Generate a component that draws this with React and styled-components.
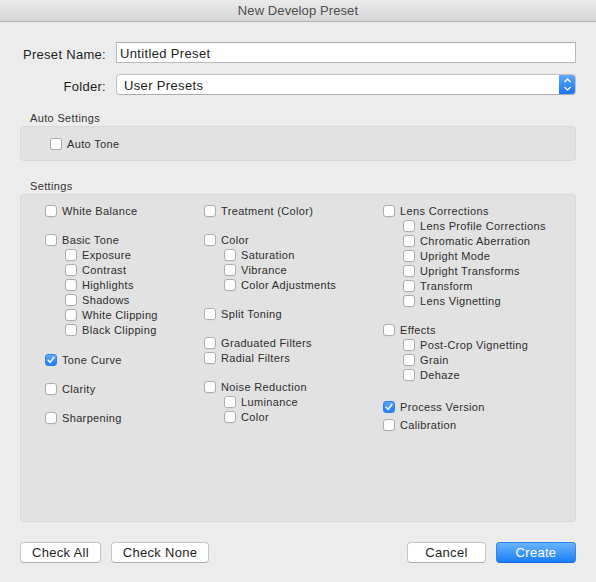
import React from 'react';
import styled, { createGlobalStyle } from 'styled-components';

const GlobalStyle = createGlobalStyle`
  html, body {
    margin: 0;
    padding: 0;
    background: #ececec;
  }
  body {
    font-family: "Liberation Sans", Arial, sans-serif;
    -webkit-font-smoothing: antialiased;
  }
`;

const columns = [
  [
    { label: 'White Balance' },
    { label: 'Basic Tone', top: 14 },
    { label: 'Exposure', sub: true },
    { label: 'Contrast', sub: true },
    { label: 'Highlights', sub: true },
    { label: 'Shadows', sub: true },
    { label: 'White Clipping', sub: true },
    { label: 'Black Clipping', sub: true },
    { label: 'Tone Curve', top: 15, checked: true },
    { label: 'Clarity', top: 14 },
    { label: 'Sharpening', top: 14 },
  ],
  [
    { label: 'Treatment (Color)' },
    { label: 'Color', top: 14 },
    { label: 'Saturation', sub: true },
    { label: 'Vibrance', sub: true },
    { label: 'Color Adjustments', sub: true },
    { label: 'Split Toning', top: 14 },
    { label: 'Graduated Filters', top: 14 },
    { label: 'Radial Filters' },
    { label: 'Noise Reduction', top: 14 },
    { label: 'Luminance', sub: true },
    { label: 'Color', sub: true },
  ],
  [
    { label: 'Lens Corrections' },
    { label: 'Lens Profile Corrections', sub: true },
    { label: 'Chromatic Aberration', sub: true },
    { label: 'Upright Mode', sub: true },
    { label: 'Upright Transforms', sub: true },
    { label: 'Transform', sub: true },
    { label: 'Lens Vignetting', sub: true },
    { label: 'Effects', top: 14 },
    { label: 'Post-Crop Vignetting', sub: true },
    { label: 'Grain', sub: true },
    { label: 'Dehaze', sub: true },
    { label: 'Process Version', top: 17, checked: true },
    { label: 'Calibration', top: 3 },
  ],
];

const Checkbox = ({ checked }) => (
  <Box $checked={checked}>
    {checked && (
      <svg width="12" height="12" viewBox="0 0 12 12">
        <path d="M3.2 6.3 L5.2 8.4 L8.8 3.4" fill="none" stroke="#fff" strokeWidth="1.6" strokeLinecap="round" strokeLinejoin="round" />
      </svg>
    )}
  </Box>
);

const Item = ({ label, sub, top, checked }) => (
  <Row $sub={sub} $top={top}>
    <Checkbox checked={checked} />
    <RowLabel>{label}</RowLabel>
  </Row>
);

const Stepper = () => (
  <StepperBox>
    <svg width="17" height="21" viewBox="0 0 17 21">
      <path d="M5.5 8 L8.5 5 L11.5 8" fill="none" stroke="#fff" strokeWidth="1.3" />
      <path d="M5.5 13 L8.5 16 L11.5 13" fill="none" stroke="#fff" strokeWidth="1.3" />
    </svg>
  </StepperBox>
);

const App = () => {
  return (
    <>
      <GlobalStyle />
      <Window>
        <TitleBar>New Develop Preset</TitleBar>
        <Body>
          <Form>
            <FieldLabel>Preset Name:</FieldLabel>
            <TextField defaultValue="Untitled Preset" />
            <FieldLabel>Folder:</FieldLabel>
            <Select>
              <SelectText>User Presets</SelectText>
              <Stepper />
            </Select>
          </Form>

          <SectionLabel $top={16}>Auto Settings</SectionLabel>
          <Panel $pad="9px 0 9px 29px">
            <Item label="Auto Tone" />
          </Panel>

          <SectionLabel $top={18}>Settings</SectionLabel>
          <Panel $pad="8px 0 0 24px" $height={328}>
            <Grid>
              {columns.map((col, i) => (
                <Column key={i}>
                  {col.map((item, j) => (
                    <Item key={j} {...item} />
                  ))}
                </Column>
              ))}
            </Grid>
          </Panel>

          <Footer>
            <Group>
              <Button $width={81}>Check All</Button>
              <Button $width={98}>Check None</Button>
            </Group>
            <Group>
              <Button $width={79}>Cancel</Button>
              <Button $width={80} $primary>Create</Button>
            </Group>
          </Footer>
        </Body>
      </Window>
    </>
  );
};

const Window = styled.div`
  width: 596px;
  height: 582px;
  background: #ececec;
  display: flex;
  flex-direction: column;
  border-radius: 5px 5px 0 0;
  overflow: hidden;
`;

const TitleBar = styled.div`
  height: 21px;
  border-bottom: 1px solid #b3b3b3;
  background: linear-gradient(#ebebeb, #d6d6d6);
  display: flex;
  align-items: center;
  justify-content: center;
  font-size: 13px;
  letter-spacing: 0.1px;
  color: #4d4d4d;
`;

const Body = styled.div`
  padding: 20px 20px 0 20px;
  display: flex;
  flex-direction: column;
`;

const Form = styled.div`
  display: grid;
  grid-template-columns: 86px 1fr;
  grid-auto-rows: 21px;
  column-gap: 10px;
  row-gap: 11px;
  align-items: center;
`;

const FieldLabel = styled.div`
  box-sizing: border-box;
  height: 21px;
  padding-top: 2px;
  line-height: 21px;
  text-align: right;
  font-size: 13px;
  letter-spacing: 0.3px;
  color: #1e1e1e;
`;

const TextField = styled.input`
  box-sizing: border-box;
  height: 21px;
  margin: 0;
  padding: 1px 3px 0;
  border: 1px solid #b9b9b9;
  border-top-color: #acacac;
  background: #fff;
  font-family: inherit;
  font-size: 13px;
  letter-spacing: 0.35px;
  color: #222;
  outline: none;
`;

const Select = styled.div`
  box-sizing: border-box;
  height: 21px;
  display: flex;
  align-items: center;
  border: 1px solid #c2c2c2;
  border-bottom-color: #adadad;
  border-radius: 4px;
  background: #fff;
  overflow: hidden;
`;

const SelectText = styled.div`
  flex: 1;
  padding: 1px 0 0 7px;
  font-size: 13px;
  letter-spacing: 0.35px;
  color: #222;
`;

const StepperBox = styled.div`
  width: 17px;
  height: 21px;
  margin: -1px -1px -1px 0;
  background: linear-gradient(#63adfb, #1371f6);
  display: flex;
`;

const SectionLabel = styled.div`
  margin-top: ${(p) => p.$top}px;
  margin-left: 10px;
  margin-bottom: 1px;
  height: 14px;
  line-height: 14px;
  font-size: 11px;
  letter-spacing: 0.35px;
  color: #333;
`;

const Panel = styled.div`
  box-sizing: border-box;
  height: ${(p) => (p.$height ? `${p.$height}px` : 'auto')};
  padding: ${(p) => p.$pad};
  background: #e2e2e2;
  border: 1px solid #d8d8d8;
  border-radius: 4px;
`;

const Grid = styled.div`
  display: grid;
  grid-template-columns: 159px 179px 1fr;
`;

const Column = styled.div`
  display: flex;
  flex-direction: column;
`;

const Row = styled.div`
  display: flex;
  align-items: center;
  gap: 5px;
  height: 15px;
  margin-top: ${(p) => p.$top || 0}px;
  padding-left: ${(p) => (p.$sub ? 20 : 0)}px;
`;

const Box = styled.div`
  box-sizing: border-box;
  width: 12px;
  height: 12px;
  flex: none;
  border-radius: 3px;
  display: flex;
  border: 1px solid ${(p) => (p.$checked ? '#2a82f0' : '#acacac')};
  background: ${(p) => (p.$checked ? 'linear-gradient(#5aa9fa, #1f7ef5)' : '#fff')};
  box-shadow: 0 0.5px 0 rgba(0, 0, 0, 0.05);
  svg {
    margin: -1px;
  }
`;

const RowLabel = styled.span`
  font-size: 11px;
  letter-spacing: 0.35px;
  color: #2e2e2e;
  white-space: nowrap;
`;

const Footer = styled.div`
  margin-top: 20px;
  display: flex;
  justify-content: space-between;
`;

const Group = styled.div`
  display: flex;
  gap: 10px;
`;

const Button = styled.button`
  box-sizing: border-box;
  width: ${(p) => p.$width}px;
  height: 21px;
  margin: 0;
  padding: 0;
  font-family: inherit;
  font-size: 13px;
  letter-spacing: 0.3px;
  border-radius: 4px;
  color: ${(p) => (p.$primary ? '#fff' : '#1e1e1e')};
  background: ${(p) => (p.$primary ? 'linear-gradient(#6ab4fb, #1a7ff6)' : '#fff')};
  border: 1px solid ${(p) => (p.$primary ? '#2b86f3' : '#c5c5c5')};
  border-bottom-color: ${(p) => (p.$primary ? '#1668e0' : '#ababab')};
`;

export default App;
